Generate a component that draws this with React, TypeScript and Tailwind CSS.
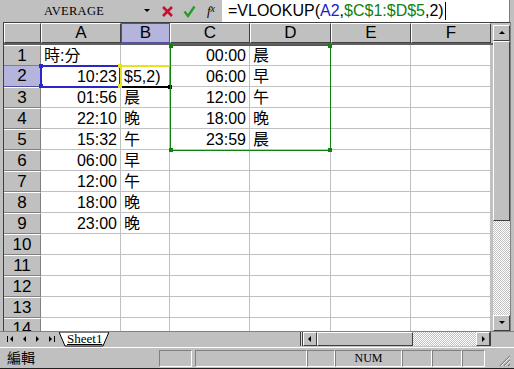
import React from 'react';

const cols = ['A', 'B', 'C', 'D', 'E', 'F'];
const colW = ['w-[80px]', 'w-[49px]', 'w-[80px]', 'w-[81px]', 'w-[80px]', 'w-[80px]'];

type Cell = { t: string; right?: boolean };
const data: Record<number, (Cell | null)[]> = {
  1: [{ t: '時:分' }, null, { t: '00:00', right: true }, { t: '晨' }],
  2: [{ t: '10:23', right: true }, null, { t: '06:00', right: true }, { t: '早' }],
  3: [{ t: '01:56', right: true }, { t: '晨' }, { t: '12:00', right: true }, { t: '午' }],
  4: [{ t: '22:10', right: true }, { t: '晚' }, { t: '18:00', right: true }, { t: '晚' }],
  5: [{ t: '15:32', right: true }, { t: '午' }, { t: '23:59', right: true }, { t: '晨' }],
  6: [{ t: '06:00', right: true }, { t: '早' }],
  7: [{ t: '12:00', right: true }, { t: '午' }],
  8: [{ t: '18:00', right: true }, { t: '晚' }],
  9: [{ t: '23:00', right: true }, { t: '晚' }],
};

const rows = Array.from({ length: 14 }, (_, i) => i + 1);
const hatch = 'bg-[repeating-conic-gradient(#ffffff_0_25%,#c0c0c0_0_50%)] bg-[length:2px_2px]';
const bevel = 'border border-t-white border-l-white border-r-[#404040] border-b-[#404040]';
const sunk = 'border border-t-[#808080] border-l-[#808080] border-r-white border-b-white';

function Arrow({ dir }: { dir: 'up' | 'down' | 'left' | 'right' }) {
  const pts = {
    up: '1,5 7,5 4,2',
    down: '1,2 7,2 4,5',
    left: '5,1 5,7 2,4',
    right: '3,1 3,7 6,4',
  }[dir];
  return (
    <svg width="8" height="8" viewBox="0 0 8 8">
      <polygon points={pts} fill="#000" />
    </svg>
  );
}

export default function App() {
  return (
    <div className="w-[514px] h-[369px] bg-[#c0c0c0] flex flex-col overflow-hidden font-['Liberation_Sans','Noto_Sans_CJK_TC',sans-serif] text-black relative">
      {/* formula bar */}
      <div className="h-[22px] flex items-center shrink-0">
        <div className="w-[140px] pl-[44px] font-['Liberation_Serif','DejaVu_Serif',serif] text-[12.5px] tracking-[0.3px] leading-none">
          AVERAGE
        </div>
        <div className="w-[14px] flex justify-center">
          <svg width="6" height="4" viewBox="0 0 6 4">
            <polygon points="0,0 6,0 3,3" fill="#000" />
          </svg>
        </div>
        <div className="w-[22px] flex justify-center ml-[2px]">
          <svg width="13" height="13" viewBox="0 0 13 13">
            <path d="M2 2 L11 11 M11 2 L2 11" stroke="#c8102e" strokeWidth="2.6" />
          </svg>
        </div>
        <div className="w-[22px] flex justify-center">
          <svg width="13" height="13" viewBox="0 0 13 13">
            <path d="M1.5 6.5 L5 11 L11.5 1.5" stroke="#2a9a2a" strokeWidth="2.4" fill="none" />
          </svg>
        </div>
        <div className="w-[22px] flex justify-center font-['Liberation_Serif',serif] italic text-[13px]">
          f<span className="text-[10px]">x</span>
        </div>
        <div className="flex-1 h-[22px] bg-white flex items-center pl-[6px] text-[16px] mr-[4px] border-r border-[#808080]">
          <span>=VLOOKUP(</span>
          <span className="text-[#2020c0]">A2</span>
          <span>,</span>
          <span className="text-[#108010]">$C$1:$D$5</span>
          <span>,2)</span>
          <span className="w-[1px] h-[18px] bg-black ml-[1px]" />
        </div>
      </div>

      {/* sheet area */}
      <div className="flex shrink-0 h-[309px] pl-[3px]">
        <div className="relative border-l border-t border-[#404040] overflow-hidden w-[490px]">
          {/* header row */}
          <div className="flex h-[22px] border-b-2 border-[#606060]">
            <div className={`w-[37px] ${bevel} bg-[#c0c0c0]`} />
            {cols.map((c, i) => (
              <div
                key={c}
                className={`${colW[i]} flex items-center justify-center text-[17px] ${
                  c === 'B'
                    ? 'bg-[#b4b4dc] border border-[#5050a0]'
                    : `${bevel} bg-[#c0c0c0]`
                }`}
              >
                {c}
              </div>
            ))}
          </div>
          {rows.map((r) => (
            <div key={r} className="flex h-[21px]">
              <div
                className={`w-[37px] flex items-center justify-center text-[17px] border-r border-b ${
                  r === 2
                    ? 'bg-[#b4b4dc] border-[#5050a0]'
                    : 'bg-[#c0c0c0] border-t border-t-white border-r-[#808080] border-b-[#808080]'
                }`}
              >
                {r}
              </div>
              {cols.map((c, i) => {
                const cell = data[r]?.[i];
                return (
                  <div
                    key={c}
                    className={`${colW[i]} bg-white border-r border-b border-[#c0c0c0] flex items-center text-[16px] px-[3px] pt-[1px] ${
                      cell?.right ? 'justify-end' : 'justify-start'
                    }`}
                  >
                    {cell?.t}
                  </div>
                );
              })}
            </div>
          ))}

          {/* selection A2 */}
          <div className="absolute left-[36px] top-[42px] w-[81px] h-[23px] border-2 border-[#2828c8]" />
          <div className="absolute left-[35px] top-[41px] w-[4px] h-[4px] bg-[#2828c8]" />
          <div className="absolute left-[35px] top-[61px] w-[4px] h-[4px] bg-[#2828c8]" />
          {/* edit cell B2 */}
          <div className="absolute left-[116px] top-[42px] w-[51px] h-[23px] bg-white border-2 border-l-[#e8e020] border-t-[#e8e020] border-r-[#c08080] border-b-black flex items-center pl-[2px] text-[16px]">
            $5,2)
          </div>
          <div className="absolute left-[114px] top-[41px] w-[4px] h-[4px] bg-[#e8e020]" />
          <div className="absolute left-[114px] top-[61px] w-[4px] h-[4px] bg-[#e8e020]" />
          <div className="absolute left-[164px] top-[62px] w-[4px] h-[4px] bg-black" />
          {/* lookup range C1:D5 */}
          <div className="absolute left-[166px] top-[22px] w-[161px] h-[106px] border border-[#108010]" />
          <div className="absolute left-[165px] top-[21px] w-[4px] h-[4px] bg-[#108010]" />
          <div className="absolute left-[324px] top-[21px] w-[4px] h-[4px] bg-[#108010]" />
          <div className="absolute left-[165px] top-[125px] w-[4px] h-[4px] bg-[#108010]" />
          <div className="absolute left-[324px] top-[125px] w-[4px] h-[4px] bg-[#108010]" />
        </div>

        {/* vertical scrollbar */}
        <div className="w-[17px] flex flex-col border-t border-[#404040]">
          <div className="h-[2px] bg-[#c0c0c0]" />
          <div className={`h-[16px] ${bevel} bg-[#c0c0c0] flex items-center justify-center`}>
            <Arrow dir="up" />
          </div>
          <div className={`h-[180px] ${bevel} bg-[#c0c0c0]`} />
          <div className={`flex-1 ${hatch}`} />
          <div className={`h-[16px] ${bevel} bg-[#c0c0c0] flex items-center justify-center`}>
            <Arrow dir="down" />
          </div>
        </div>
        <div className="w-[4px] border-l border-[#808080]" />
      </div>

      {/* tab bar + horizontal scrollbar */}
      <div className="h-[15px] flex items-stretch shrink-0 pl-[3px] border-t border-[#808080]">
        <div className="w-[56px] flex items-center justify-around px-[2px]">
          <span className="flex items-center"><span className="w-[1px] h-[6px] bg-black" /><Arrow dir="left" /></span>
          <Arrow dir="left" />
          <Arrow dir="right" />
          <span className="flex items-center"><Arrow dir="right" /><span className="w-[1px] h-[6px] bg-black" /></span>
        </div>
        <div className="relative w-[50px] h-[15px]">
          <svg width="50" height="15" viewBox="0 0 50 15" className="absolute left-0 top-0">
            <polygon points="0,0 6,14 44,14 50,0" fill="#ffffff" stroke="#000" strokeWidth="1" />
          </svg>
          <span className="absolute left-[8px] top-[-1px] font-['Liberation_Serif',serif] text-[13px] underline leading-[15px]">Sheet1</span>
        </div>
        <div className="w-[191px]" />
        <div className="w-[3px] border-l border-r border-[#404040] bg-[#e0e0e0]" />
        <div className={`w-[14px] ${bevel} bg-[#c0c0c0] flex items-center justify-center`}>
          <Arrow dir="left" />
        </div>
        <div className={`w-[96px] ${bevel} bg-[#c0c0c0]`} />
        <div className={`flex-1 ${hatch}`} />
        <div className={`w-[14px] ${bevel} bg-[#c0c0c0] flex items-center justify-center`}>
          <Arrow dir="right" />
        </div>
        <div className="w-[22px] border-l border-[#404040] mr-[2px]" />
      </div>

      {/* status bar */}
      <div className="h-[21px] flex items-center shrink-0 border-t border-white mt-[1px]">
        <div className="w-[159px] pl-[7px] text-[14px] leading-none">編輯</div>
        <div className={`w-[33px] h-[17px] ${sunk}`} />
        <div className="w-[3px]" />
        <div className={`w-[112px] h-[17px] ${sunk}`} />
        <div className={`w-[28px] h-[17px] ${sunk}`} />
        <div className={`w-[67px] h-[17px] ${sunk} flex items-center justify-center font-['Liberation_Serif',serif] text-[12px]`}>
          NUM
        </div>
        <div className={`w-[30px] h-[17px] ${sunk}`} />
        <div className={`w-[30px] h-[17px] ${sunk}`} />
        <div className={`w-[23px] h-[17px] ${sunk}`} />
        <div className="flex-1 h-[17px] flex items-end justify-end pr-[3px]">
          <svg width="12" height="12" viewBox="0 0 12 12">
            <path d="M11 1 L1 11 M11 5 L5 11 M11 9 L9 11" stroke="#808080" strokeWidth="1.2" />
            <path d="M11 2 L2 11 M11 6 L6 11" stroke="#ffffff" strokeWidth="0.8" />
          </svg>
        </div>
      </div>
      <div className="flex-1 bg-[#202020]" />
    </div>
  );
}
